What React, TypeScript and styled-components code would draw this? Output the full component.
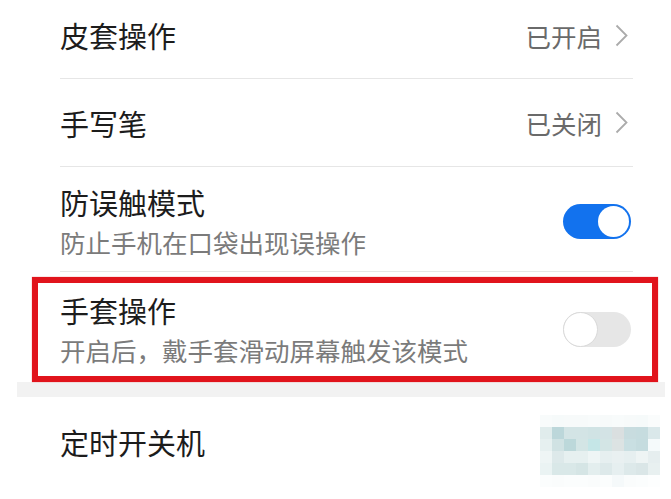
import React from "react";
import styled, { createGlobalStyle } from "styled-components";

const GlobalStyle = createGlobalStyle`
  html, body {
    margin: 0;
    padding: 0;
    background: #ffffff;
  }
  body {
    font-family: "Noto Sans CJK SC", "Noto Sans", sans-serif;
    -webkit-font-smoothing: antialiased;
  }
`;

const Page = styled.div`
  width: 671px;
  height: 499px;
  overflow: hidden;
  background: #fff;
  padding: 0 6px 0 17px;
  box-sizing: border-box;
`;

const Section = styled.div`
  background: #fff;
`;

const SectionGap = styled.div`
  height: 15px;
  background: #f2f2f2;
`;

const Row = styled.div<{ $h?: number; $pt?: number; $pb?: number }>`
  position: relative;
  padding: 0 32px 0 43px;
`;

const RowInner = styled.div<{ $h?: number; $pt?: number; $pb?: number; $line?: boolean }>`
  display: flex;
  align-items: center;
  justify-content: space-between;
  box-sizing: border-box;
  ${({ $h }) => ($h ? `height: ${$h}px;` : "")}
  padding-top: ${({ $pt }) => $pt ?? 0}px;
  padding-bottom: ${({ $pb }) => $pb ?? 0}px;
  border-bottom: ${({ $line }) => ($line ? "1px solid #e6e6e6" : "none")};
`;

const TextCol = styled.div`
  display: flex;
  flex-direction: column;
`;

const Title = styled.div`
  font-size: 29px;
  line-height: 38px;
  color: #1c1c1c;
`;

const Subtitle = styled.div`
  margin-top: 3px;
  font-size: 25.5px;
  line-height: 36px;
  color: #7b7b7b;
`;

const Value = styled.div`
  display: flex;
  align-items: center;
  gap: 13px;
  margin-right: 5px;
  font-size: 25.5px;
  color: #6a6a6a;
`;

const Chevron = styled.svg`
  width: 13px;
  height: 23px;
  display: block;
`;

const Track = styled.div<{ $on: boolean }>`
  position: relative;
  flex-shrink: 0;
  width: 68px;
  height: 35px;
  margin-right: 2px;
  border-radius: 18px;
  background: ${({ $on }) => ($on ? "#1272ee" : "#e6e6e6")};
`;

const Knob = styled.div<{ $on: boolean }>`
  position: absolute;
  top: ${({ $on }) => ($on ? 2 : 0)}px;
  left: ${({ $on }) => ($on ? "35px" : "0")};
  width: ${({ $on }) => ($on ? 31 : 35)}px;
  height: ${({ $on }) => ($on ? 31 : 35)}px;
  box-sizing: border-box;
  border-radius: 50%;
  background: #fff;
  border: ${({ $on }) => ($on ? "none" : "1.5px solid #d9d9d9")};
`;

const Highlight = styled.div`
  position: absolute;
  left: 15px;
  right: 7px;
  top: 5px;
  bottom: 0;
  border: 6px solid #e1141c;
  box-shadow: 0 0 1px rgba(225, 20, 28, 0.6);
  pointer-events: none;
`;

const Mosaic = styled.div`
  position: absolute;
  top: 18px;
  right: 5px;
  display: grid;
  grid-template-columns: repeat(10, 12px);
  grid-auto-rows: 12px;
`;

const Cell = styled.div<{ $c: string }>`
  background: ${({ $c }) => $c};
`;

const mosaic = [
  ["#f8fbfb", "#f6fafa", "#f7fafa", "#f7fafa", "#f8fbfb", "#f7fafa", "#f8fbfb", "#f7fafa", "#f6fafa", "#fafcfc"],
  ["#e0ecec", "#bcd7da", "#d3e4e5", "#d3e4e5", "#d0e3e4", "#d3e3e5", "#dadfe0", "#c8dcdf", "#c6dcdf", "#dae8ea"],
  ["#e6f0f0", "#d0e2e3", "#bcd8da", "#d3e5e5", "#c5e6e7", "#d3e5e5", "#dce3e3", "#c9dfe2", "#c5dcdf", "#f5fafb"],
  ["#eef5f5", "#dde9ea", "#e6f0f0", "#e6f0f0", "#eef5f5", "#e6eff0", "#e9f0f1", "#e6eff0", "#eef4f4", "#e6eeef"],
  ["#eaf3f3", "#d9e8e8", "#d9e8e8", "#d5e5e5", "#e3eeee", "#dde9ea", "#e6eff0", "#dde9ea", "#dae6e7", "#e8f0f0"],
  ["#fbfdfd", "#fafcfc", "#fbfdfd", "#fbfdfd", "#fafcfc", "#fbfdfd", "#f5f9fa", "#fafcfc", "#fbfdfd", "#fdfefe"],
];

function Arrow() {
  return (
    <Chevron viewBox="0 0 13 23">
      <polyline points="1.5,1.5 11.5,11.5 1.5,21.5" fill="none" stroke="#ababab" strokeWidth="1.8" />
    </Chevron>
  );
}

function Toggle({ on }: { on: boolean }) {
  return (
    <Track $on={on}>
      <Knob $on={on} />
    </Track>
  );
}

export default function App() {
  return (
    <>
      <GlobalStyle />
      <Page>
        <Section>
          <Row>
            <RowInner $h={79} $pb={8} $line>
              <Title>皮套操作</Title>
              <Value>
                已开启
                <Arrow />
              </Value>
            </RowInner>
          </Row>
          <Row>
            <RowInner $h={88} $line>
              <Title>手写笔</Title>
              <Value>
                已关闭
                <Arrow />
              </Value>
            </RowInner>
          </Row>
          <Row>
            <RowInner $pt={16} $pb={11} $line>
              <TextCol>
                <Title>防误触模式</Title>
                <Subtitle>防止手机在口袋出现误操作</Subtitle>
              </TextCol>
              <Toggle on />
            </RowInner>
          </Row>
          <Row>
            <RowInner $pt={19} $pb={14}>
              <TextCol>
                <Title>手套操作</Title>
                <Subtitle>开启后，戴手套滑动屏幕触发该模式</Subtitle>
              </TextCol>
              <Toggle on={false} />
            </RowInner>
            <Highlight />
          </Row>
        </Section>
        <SectionGap />
        <Section>
          <Row>
            <RowInner $h={90}>
              <Title>定时开关机</Title>
            </RowInner>
            <Mosaic>
              {mosaic.flat().map((c, i) => (
                <Cell key={i} $c={c} />
              ))}
            </Mosaic>
          </Row>
        </Section>
      </Page>
    </>
  );
}
